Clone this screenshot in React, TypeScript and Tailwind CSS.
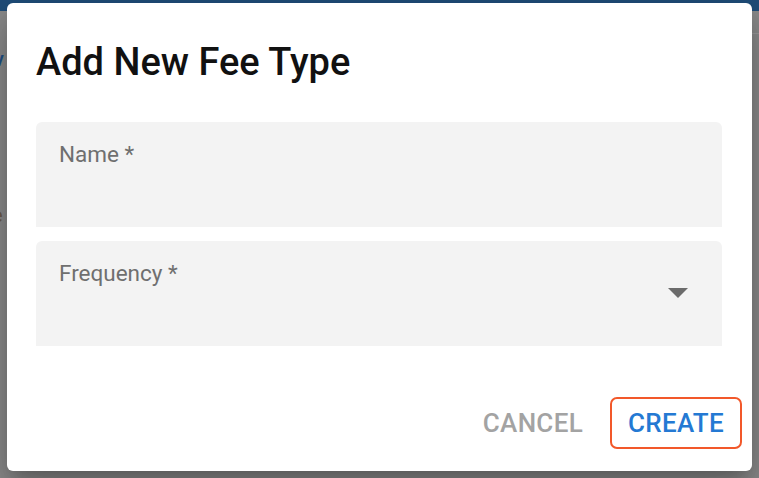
import React from "react";

export default function App() {
  return (
    <div
      className="relative w-[759px] h-[478px] overflow-hidden bg-[#8b8b8b]"
      style={{ fontFamily: "Roboto, 'Liberation Sans', sans-serif" }}
    >
      {/* dimmed app behind the dialog */}
      <div className="h-[11px] bg-[#1f4d79]" />
      <div className="absolute left-[-6px] top-[44px] text-[20px] font-medium text-[#1d4f85]">v</div>
      <div className="absolute left-[-8px] top-[200px] text-[20px] text-[#6b5a4a]">e</div>
      <div className="absolute right-0 top-[33px] w-[8px] h-px bg-[#9a9a9a]" />

      {/* dialog */}
      <div className="absolute left-[7px] top-[3px] w-[745px] h-[468px] rounded-[6px] bg-white shadow-[0_11px_15px_-7px_rgba(0,0,0,0.2),0_24px_38px_3px_rgba(0,0,0,0.14),0_9px_46px_8px_rgba(0,0,0,0.12)] flex flex-col">
        <div className="pt-[40px] pl-[29px] pr-[30px]">
          <h2 className="text-[38px] leading-[38px] font-medium text-[#111111]">
            Add New Fee Type
          </h2>
        </div>
        <div className="mt-[41px] pl-[29px] pr-[30px] flex flex-col gap-[14px]">
          <div className="h-[105px] rounded-t-[6px] bg-[#f3f3f3] pl-[23px] pt-[21px]">
            <span className="block text-[22.5px] leading-[22px] text-[#6f6f6f]">Name *</span>
          </div>
          <div className="relative h-[105px] rounded-t-[6px] bg-[#f3f3f3] pl-[23px] pt-[21px] flex items-start">
            <span className="block text-[22.5px] leading-[22px] text-[#6f6f6f]">Frequency *</span>
            <svg
              className="absolute right-[34px] top-[47px]"
              width="20"
              height="10"
              viewBox="0 0 20 10"
            >
              <path d="M0 0 L20 0 L10 10 Z" fill="#6b6b6b" />
            </svg>
          </div>
        </div>
        <div className="mt-auto mb-[22px] mr-[10px] flex justify-end items-center gap-[9px]">
          <button className="h-[52px] px-[18px] text-[26px] leading-[26px] font-medium text-[#a3a3a3] tracking-[0.3px]">
            CANCEL
          </button>
          <button className="h-[52px] px-[16px] rounded-[7px] border-2 border-[#f2582a] text-[26px] leading-[26px] font-medium text-[#2479d3] tracking-[0.3px]">
            CREATE
          </button>
        </div>
      </div>
    </div>
  );
}
